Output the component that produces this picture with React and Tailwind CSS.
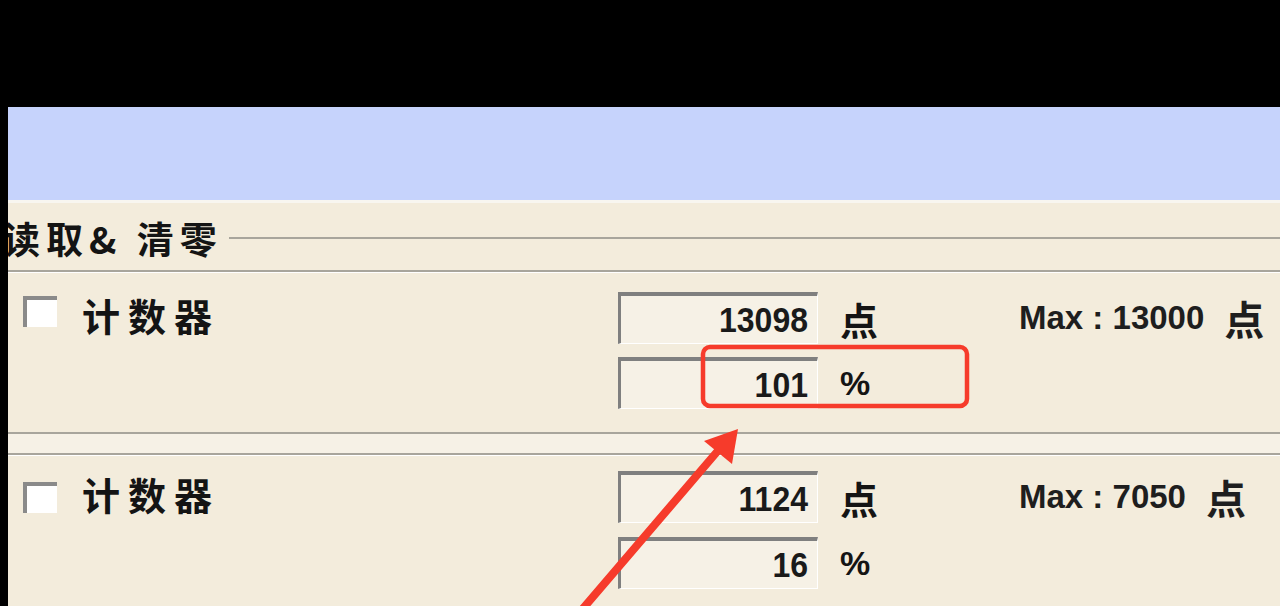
export default function App() {
  const rows = [
    { points: '13098', percent: '101', max: '13000', top: 'pt-[19px]', gap: 'gap-[13px]', h: 'h-[159px]', cb: 'mt-[4px]' },
    { points: '1124', percent: '16', max: '7050', top: 'pt-[15px]', gap: 'gap-[14px]', h: 'h-[150px]', cb: 'mt-[11px]' },
  ];

  const Box = ({ value }) => (
    <div className="h-[52px] w-[200px] border-t-[4px] border-l-[3px] border-r border-b border-t-[#7f7f7f] border-l-[#7f7f7f] border-r-white border-b-white bg-[#f6f1e6] flex items-center justify-end pr-[9px]">
      <span className="inline-block text-[32px] font-bold leading-none text-[#1a1a1a] scale-y-[1.1]" style={{ fontFamily: '"Liberation Sans", Arial, sans-serif' }}>{value}</span>
    </div>
  );

  return (
    <div className="relative w-[1280px] h-[606px] bg-black overflow-hidden">
      <div className="h-[107px]" />
      <div className="flex h-[499px]">
        <div className="w-[8px] bg-black" />
        <div className="flex-1 flex flex-col bg-[#f3ecdc] overflow-hidden">
          <div className="h-[96px] shrink-0 bg-[#c6d3fc] border-b-[3px] border-[#f8f6f0]" />

          <div className="h-[69px] shrink-0 flex items-start pt-[12px] border-b-2 border-[#a8a59c]">
            <div
              className="ml-[-5px] text-[37px] font-bold leading-[46px] text-[#141414] whitespace-nowrap tracking-[6px]"
              style={{ fontFamily: '"Noto Sans CJK SC", sans-serif' }}
            >
              读取&amp; 清零
            </div>
            <div className="flex-1 ml-[6px] mt-[22px] h-[2px] bg-[#a8a59c]" />
          </div>
          <div className="h-px shrink-0 bg-white" />

          {rows.map((r, i) => (
            <div key={i} className="flex flex-col shrink-0">
              {i === 1 && (
                <div className="flex flex-col">
                  <div className="h-[2px] bg-[#a8a59c]" />
                  <div className="h-[19px] bg-[#f6f1e6]" />
                  <div className="h-[2px] bg-[#a8a59c]" />
                  <div className="h-px bg-white" />
                </div>
              )}
              <div className={`flex ${r.h} ${r.top}`}>
                <div className="w-[610px] pl-[15px] flex items-start">
                  <div className={`${r.cb} w-[34px] h-[31px] border-t-[4px] border-l-[4px] border-t-[#8a8a8a] border-l-[#8a8a8a] bg-white`} />
                  <div
                    className="ml-[25px] text-[38px] font-bold leading-[46px] tracking-[8px] text-[#141414]"
                    style={{ fontFamily: '"Noto Sans CJK SC", sans-serif' }}
                  >
                    计数器
                  </div>
                </div>
                <div className={`flex flex-col ${r.gap}`}>
                  <Box value={r.points} />
                  <Box value={r.percent} />
                </div>
                <div className={`w-[201px] pl-[22px] flex flex-col ${r.gap}`}>
                  <div className="h-[52px] flex items-center text-[38px] font-bold text-[#141414]" style={{ fontFamily: '"Noto Sans CJK SC", sans-serif' }}>点</div>
                  <div className="h-[52px] flex items-center text-[34px] font-bold text-[#141414]" style={{ fontFamily: '"Liberation Sans", Arial, sans-serif' }}>%</div>
                </div>
                <div className="h-[52px] flex items-center whitespace-nowrap text-[#1e1e1e]">
                  <span className="text-[33px] font-bold" style={{ fontFamily: '"Liberation Sans", Arial, sans-serif' }}>Max : {r.max}</span>
                  <span className="ml-[20px] text-[40px] font-bold" style={{ fontFamily: '"Noto Sans CJK SC", sans-serif' }}>点</span>
                </div>
              </div>
            </div>
          ))}
        </div>
      </div>

      <svg className="absolute left-0 top-0 pointer-events-none" width="1280" height="606" viewBox="0 0 1280 606">
        <rect x="703" y="347" width="264" height="59" rx="7" fill="none" stroke="#f63b2b" strokeWidth="4.5" />
        <line x1="580" y1="612" x2="722" y2="446" stroke="#f63b2b" strokeWidth="8" strokeLinecap="round" />
        <polygon points="738,429 704,441 732,464" fill="#f63b2b" />
      </svg>
    </div>
  );
}
